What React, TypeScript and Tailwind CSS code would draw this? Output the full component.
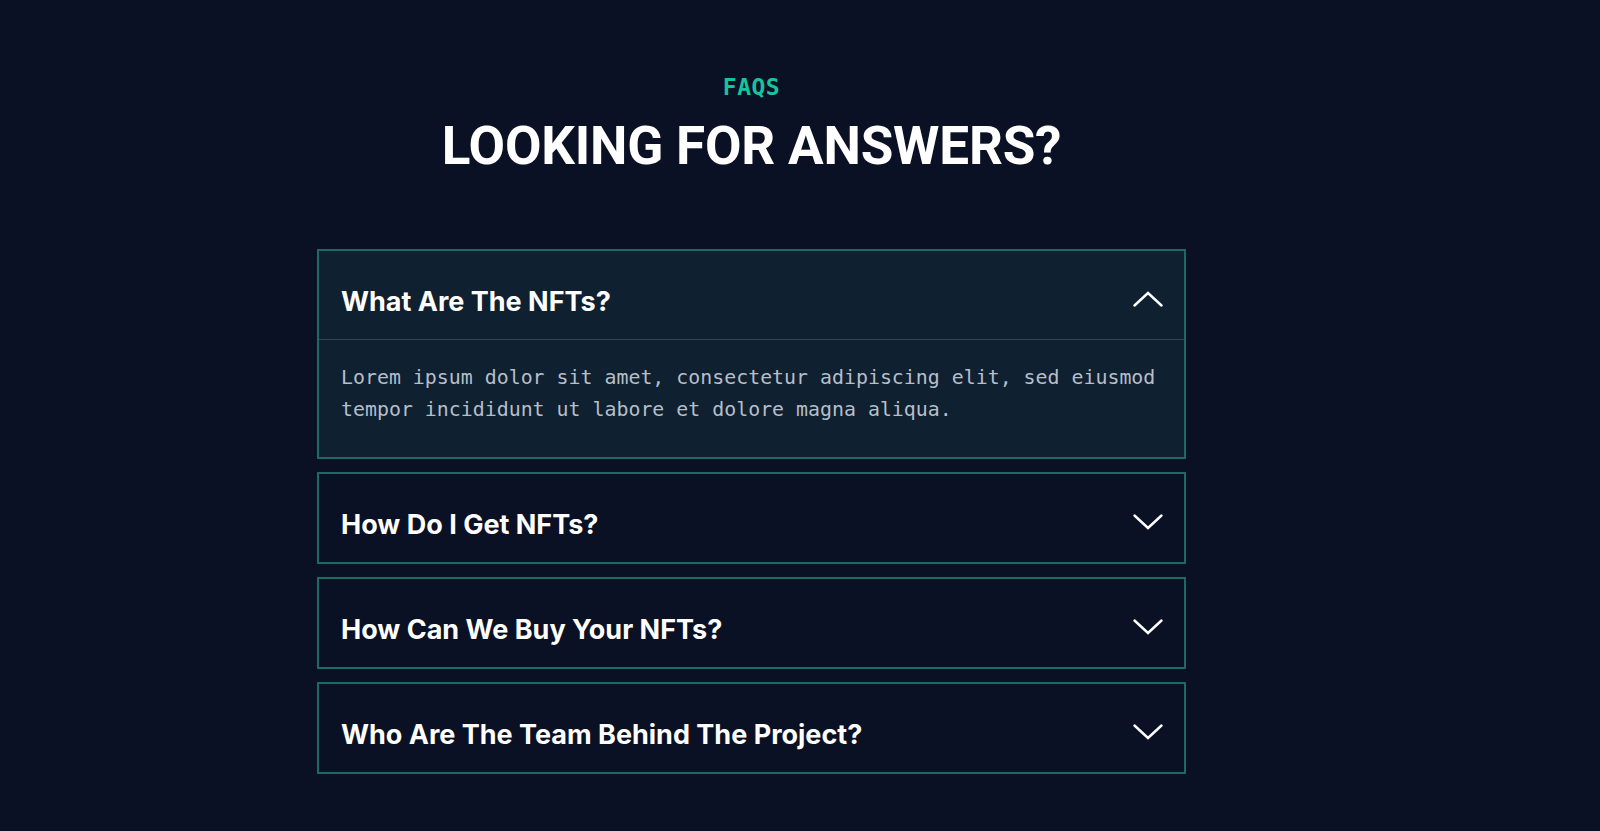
import { useState } from 'react'

const FAQS = [
  {
    q: 'What Are The NFTs?',
    a: 'Lorem ipsum dolor sit amet, consectetur adipiscing elit, sed eiusmod tempor incididunt ut labore et dolore magna aliqua.',
  },
  {
    q: 'How Do I Get NFTs?',
    a: 'Lorem ipsum dolor sit amet, consectetur adipiscing elit, sed eiusmod tempor incididunt ut labore et dolore magna aliqua.',
  },
  {
    q: 'How Can We Buy Your NFTs?',
    a: 'Lorem ipsum dolor sit amet, consectetur adipiscing elit, sed eiusmod tempor incididunt ut labore et dolore magna aliqua.',
  },
  {
    q: 'Who Are The Team Behind The Project?',
    a: 'Lorem ipsum dolor sit amet, consectetur adipiscing elit, sed eiusmod tempor incididunt ut labore et dolore magna aliqua.',
  },
]

function Chevron({ up }: { up: boolean }) {
  return (
    <svg width="30" height="16" viewBox="0 0 30 16" fill="none" className="shrink-0 mb-[7px]">
      <polyline
        points={up ? '1.5,14.5 15,2 28.5,14.5' : '1.5,1.5 15,14 28.5,1.5'}
        stroke="#ffffff"
        strokeWidth="2.4"
        strokeLinecap="round"
        strokeLinejoin="miter"
      />
    </svg>
  )
}

export default function App() {
  const [open, setOpen] = useState<number | null>(0)

  return (
    <div className="min-h-[831px] w-full bg-[#0b1125] pt-[75px] pb-[50px]">
      <div className="ml-[317px] w-[869px]">
        {/* Heading */}
        <div className="flex flex-col items-center">
          <p className="font-['DejaVu_Sans_Mono',monospace] text-[23px] font-bold leading-6 tracking-[0.5px] text-[#17c39c]">
            FAQS
          </p>
          <h2 className="mt-[19px] font-['Roboto',sans-serif] text-[53px] font-bold leading-[56px] tracking-[-0.2px] text-white">
            LOOKING FOR ANSWERS?
          </h2>
        </div>

        {/* Accordion */}
        <div className="mt-[75px] flex flex-col gap-[13px]">
          {FAQS.map((item, i) => {
            const isOpen = open === i
            return (
              <div
                key={item.q}
                className={`border-2 border-[#1c6a61] ${isOpen ? 'bg-[#0f2030]' : 'bg-[#0b1125]'}`}
              >
                <button
                  onClick={() => setOpen(isOpen ? null : i)}
                  className="flex w-full items-center justify-between pl-[22px] pr-[21px] pt-[35px] pb-[21px] text-left"
                >
                  <span className="font-['Inter',sans-serif] text-[27px] font-bold leading-8 tracking-[0px] text-white">
                    {item.q}
                  </span>
                  <Chevron up={isOpen} />
                </button>
                {isOpen && (
                  <div className="border-t border-[#1b4f52] px-[22px] pt-[22px] pb-[31px]">
                    <p className="font-['DejaVu_Sans_Mono',monospace] text-[19.9px] leading-8 text-[#b6bec9]">
                      {item.a}
                    </p>
                  </div>
                )}
              </div>
            )
          })}
        </div>
      </div>
    </div>
  )
}
